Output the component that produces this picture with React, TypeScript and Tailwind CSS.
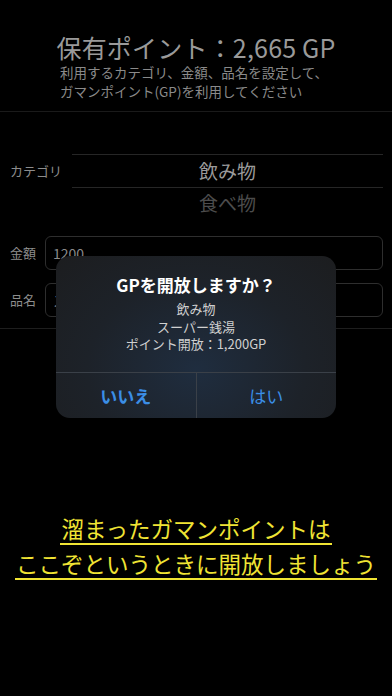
import React from 'react';

const font = { fontFamily: '"Noto Sans CJK JP", "Noto Sans", sans-serif' };

const Field: React.FC<{ label: string; value: string }> = ({ label, value }) => (
  <div className="flex items-center h-[34px]">
    <span className="w-[45px] pl-[10px] text-[13px] text-[#8c8c8c] shrink-0">{label}</span>
    <div className="flex-1 mr-[9px] h-full rounded-[6px] border border-[#2e2e2e] flex items-center px-[7px] text-[14px] text-[#8a8a8a]">
      {value}
    </div>
  </div>
);

export default function App() {
  return (
    <div className="relative w-[392px] h-[696px] bg-black overflow-hidden" style={font}>
      {/* header */}
      <div className="pt-[33px] flex flex-col items-center">
        <h1 className="text-[25px] leading-[28px] text-[#9a9a9a] font-normal tracking-[0.2px]">保有ポイント：2,665 GP</h1>
        <p className="self-start ml-[60px] mt-[2px] text-[13.5px] leading-[19px] text-[#8a8a8a] whitespace-nowrap">
          利用するカテゴリ、金額、品名を設定して、
          <br />
          ガマンポイント(GP)を利用してください
        </p>
      </div>
      <div className="mt-[10px] h-px bg-[#1a1a1a]" />

      {/* category picker */}
      <div className="mt-[42px] flex">
        <div className="w-[72px] h-[34px] flex items-center pl-[10px] text-[13px] text-[#8c8c8c]">カテゴリ</div>
        <div className="flex-1 mr-[9px] h-[70px] overflow-hidden">
          <div className="h-[34px] border-y border-[#262626] flex items-center justify-center text-[19px] text-[#9a9a9a]">
            飲み物
          </div>
          <div className="h-[30px] flex items-center justify-center text-[19px] text-[#4c4c4c]">食べ物</div>
          <div className="h-[30px] flex items-center justify-center text-[19px] text-[#2a2a2a]">日用品</div>
        </div>
      </div>

      {/* fields */}
      <div className="mt-[12px] flex flex-col gap-[13px]">
        <Field label="金額" value="1200" />
        <Field label="品名" value="スーパー銭湯" />
      </div>
      <div className="mt-[11px] h-px bg-[#1e1e1e]" />

      {/* caption */}
      <div className="mt-[185px] flex flex-col items-center text-[22.5px] leading-[28px] text-[#f0e434]">
        <span className="border-b-2 border-[#f0e434] pb-[1px] px-[1px]">溜まったガマンポイントは</span>
        <span className="mt-[4px] border-b-2 border-[#f0e434] pb-[1px] px-[1px]">ここぞというときに開放しましょう</span>
      </div>

      {/* alert */}
      <div className="absolute left-[56px] top-[256px] w-[280px] h-[162px] rounded-[14px] overflow-hidden bg-[radial-gradient(ellipse_at_50%_70%,#1f2d3f_0%,#1d2229_55%,#1c1d1f_100%)] flex flex-col">
        <div className="flex-1 flex flex-col items-center pt-[17px]">
          <div className="text-[17px] leading-[24px] font-bold text-white">GPを開放しますか？</div>
          <div className="mt-[3px] text-[13px] leading-[17.5px] text-[#d0d0d0] text-center">
            飲み物
            <br />
            スーパー銭湯
            <br />
            ポイント開放：1,200GP
          </div>
        </div>
        <div className="h-[46px] flex border-t border-[#3a4048]">
          <div className="flex-1 flex items-center justify-center text-[17px] font-bold text-[#3b8ee6]">いいえ</div>
          <div className="w-px bg-[#3a4048]" />
          <div className="flex-1 flex items-center justify-center text-[17px] text-[#3b8ee6]">はい</div>
        </div>
      </div>
    </div>
  );
}
